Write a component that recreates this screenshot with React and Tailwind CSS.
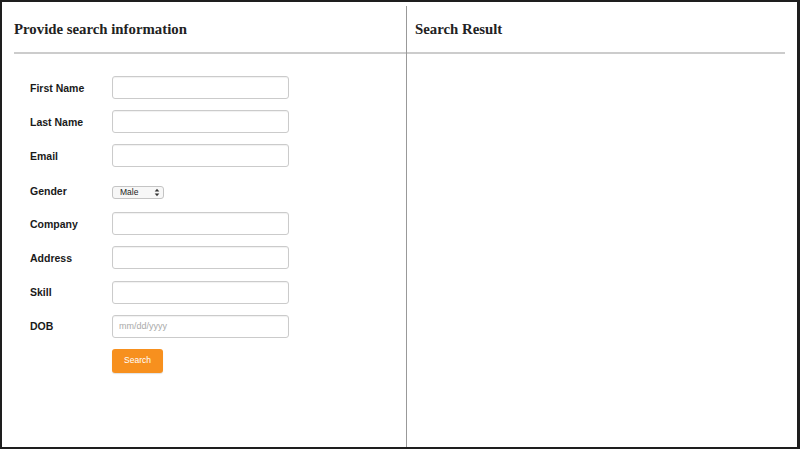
const FIELDS = [
  { label: "First Name", type: "text" },
  { label: "Last Name", type: "text" },
  { label: "Email", type: "text" },
  { label: "Gender", type: "select" },
  { label: "Company", type: "text" },
  { label: "Address", type: "text" },
  { label: "Skill", type: "text" },
  { label: "DOB", type: "date" }
];

function TextField({ placeholder }) {
  return (
    <input
      type="text"
      placeholder={placeholder}
      className="h-[23px] w-[177px] rounded-[3px] border border-[#cbcbcb] bg-white px-[6px] text-[9px] text-[#333] shadow-[inset_0_1px_1px_rgba(0,0,0,0.06)] outline-none placeholder:text-[#a9a9a9]"
    />
  );
}

function GenderSelect() {
  return (
    <div className="mt-[5px] flex h-[13px] w-[52px] items-center justify-between rounded-[3px] border border-[#c4c4c4] bg-[#f7f7f7] pl-[7px] pr-[3px] text-[8.5px] leading-none text-[#222]">
      <span>Male</span>
      <svg width="6" height="9" viewBox="0 0 6 9" className="text-[#333]">
        <path d="M3 0.8 L5.3 3.6 H0.7 Z" fill="currentColor" />
        <path d="M3 8.2 L5.3 5.4 H0.7 Z" fill="currentColor" />
      </svg>
    </div>
  );
}

function FormRow({ field }) {
  return (
    <div className="flex h-[23px] items-center">
      <label
        className={`w-[98px] shrink-0 pl-[16px] text-[10.5px] font-bold text-[#1a1a1a] ${field.type === "select" ? "mt-[5px]" : "mt-[2px]"}`}
      >
        {field.label}
      </label>
      {field.type === "select" ? (
        <GenderSelect />
      ) : (
        <TextField placeholder={field.type === "date" ? "mm/dd/yyyy" : ""} />
      )}
    </div>
  );
}

function App() {
  return (
    <main
      className="flex h-[449px] w-[800px] border-2 border-r-[3px] border-[#1e1e1e] bg-white pt-[4px]"
      style={{ fontFamily: '"Liberation Sans", Arial, sans-serif' }}
    >
      <section className="w-[405px] shrink-0 border-r border-[#999] pl-[12px]">
        <header
          className="h-[48px] border-b-2 border-[#cccccc] pt-[16px] text-[14.8px] font-bold leading-[15px] text-[#222]"
          style={{ fontFamily: '"Liberation Serif", "Times New Roman", serif' }}
        >
          Provide search information
        </header>

        <form className="mt-[22px] flex flex-col gap-[11.1px]" onSubmit={(event) => event.preventDefault()}>
          {FIELDS.map((field) => (
            <FormRow key={field.label} field={field} />
          ))}
          <div className="flex h-[24px] items-center pl-[98px]">
            <button
              type="submit"
              className="h-[24px] w-[51px] rounded-[3px] bg-[#f7901e] text-[8.5px] text-white shadow-[0_1px_1px_rgba(0,0,0,0.12)]"
            >
              Search
            </button>
          </div>
        </form>
      </section>

      <section className="flex-1 pr-[12px]">
        <header
          className="h-[48px] border-b-2 border-[#cccccc] pl-[8px] pt-[16px] text-[14.8px] font-bold leading-[15px] text-[#222]"
          style={{ fontFamily: '"Liberation Serif", "Times New Roman", serif' }}
        >
          Search Result
        </header>
      </section>
    </main>
  );
}

export default App;
